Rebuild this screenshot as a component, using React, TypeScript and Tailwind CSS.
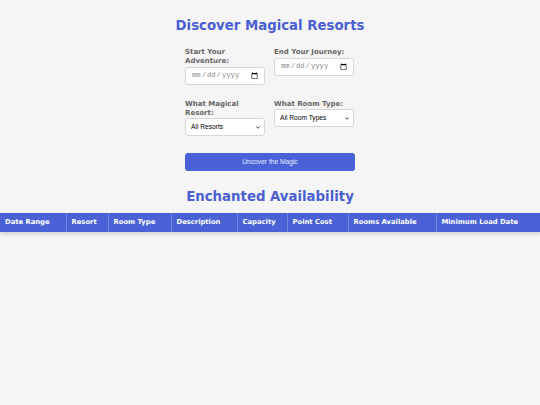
import React from "react";

const heads: [string, string][] = [
  ["Date Range", "w-[66px]"],
  ["Resort", "w-[42px]"],
  ["Room Type", "w-[63px]"],
  ["Description", "w-[66px]"],
  ["Capacity", "w-[50px]"],
  ["Point Cost", "w-[61px]"],
  ["Rooms Available", "w-[88px]"],
  ["Minimum Load Date", "w-[104px]"],
];

const verdana = { fontFamily: '"DejaVu Sans", Verdana, sans-serif' };
const mono = { fontFamily: '"Liberation Mono", "Courier New", monospace' };

function Label({ children }: { children: React.ReactNode }) {
  return (
    <label className="mb-[0.5px] text-[7px] font-bold leading-[9px] text-[#666]" style={verdana}>
      {children}
    </label>
  );
}

function DateInput() {
  return (
    <input
      type="date"
      className="block h-[18px] w-[80px] rounded-[3px] border border-[#d6d6d6] bg-white pl-[5px] pr-[4px] text-[7.2px] text-[#888]"
      style={mono}
    />
  );
}

function Select({ label }: { label: string }) {
  return (
    <div className="relative h-[18px] w-[80px]">
      <select className="block h-[18px] w-[80px] appearance-none rounded-[3px] border border-[#d6d6d6] bg-white pl-[5px] text-[6.65px] text-black">
        <option>{label}</option>
      </select>
      <svg
        className="pointer-events-none absolute right-[5px] top-[8px]"
        width="4"
        height="3"
        viewBox="0 0 4 3"
      >
        <path d="M0.4 0.5 L2 2.3 L3.6 0.5" fill="none" stroke="#333" strokeWidth="0.9" />
      </svg>
    </div>
  );
}

export default function App() {
  return (
    <div
      className="min-h-[405px] w-[540px] bg-[#f5f5f5] pt-[18px]"
      style={{ fontFamily: '"Liberation Sans", Arial, sans-serif' }}
    >
      <h1
        className="text-center text-[13.3px] font-bold leading-[16px] text-[#4a5fd2]"
        style={verdana}
      >
        Discover Magical Resorts
      </h1>
      <form className="mx-auto mt-[14px] w-[170px]">
        <div className="grid grid-cols-2 items-start gap-x-[8px] gap-y-[15px]">
          <div className="flex flex-col">
            <Label>Start Your Adventure:</Label>
            <DateInput />
          </div>
          <div className="flex flex-col">
            <Label>End Your Journey:</Label>
            <DateInput />
          </div>
          <div className="flex flex-col">
            <Label>What Magical Resort:</Label>
            <Select label="All Resorts" />
          </div>
          <div className="flex flex-col">
            <Label>What Room Type:</Label>
            <Select label="All Room Types" />
          </div>
        </div>
        <button
          type="button"
          className="mt-[17px] block h-[18px] w-[170px] rounded-[3px] bg-[#4a62d8] text-[6.65px] text-[#e8ecff]"
        >
          Uncover the Magic
        </button>
      </form>
      <h2
        className="mt-[18px] text-center text-[13.3px] font-bold leading-[16px] text-[#4a5fd2]"
        style={verdana}
      >
        Enchanted Availability
      </h2>
      <table className="mt-[8px] w-[540px] border-collapse shadow-[0_2px_4px_rgba(0,0,0,0.15)]">
        <thead>
          <tr className="bg-[#4a62d6]">
            {heads.map(([h, w], i) => (
              <th
                key={h}
                className={`${w} h-[19px] px-[5px] text-left text-[6.8px] font-bold text-white ${i > 0 ? "border-l border-[#7286e2]" : ""}`}
                style={verdana}
              >
                {h}
              </th>
            ))}
          </tr>
        </thead>
      </table>
    </div>
  );
}
